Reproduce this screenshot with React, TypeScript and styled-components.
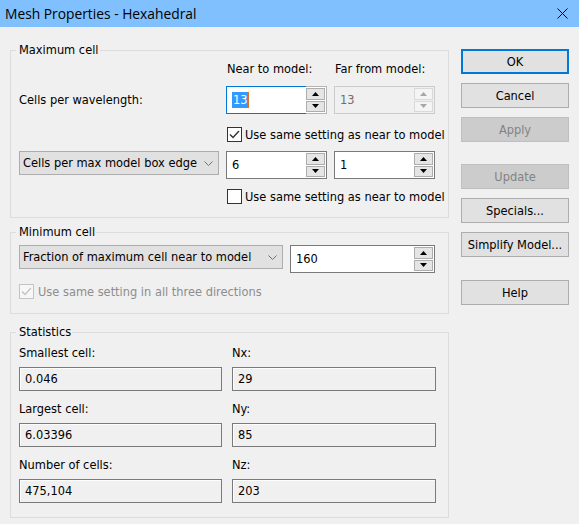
import styled, { createGlobalStyle } from 'styled-components'

const GlobalStyle = createGlobalStyle`
  html, body {
    margin: 0;
    padding: 0;
    background: #f0f0f0;
  }
  body {
    font-family: 'DejaVu Sans Condensed', 'DejaVu Sans', sans-serif;
    font-stretch: semi-condensed;
    font-size: 12.7px;
    line-height: 14px;
    color: #000;
  }
`

const Window = styled.div`
  width: 579px;
  height: 524px;
  background: #f0f0f0;
  overflow: hidden;
`
const TitleBar = styled.div`
  height: 27px;
  background: #80c0ff;
  display: flex;
  align-items: center;
  justify-content: space-between;
  padding: 0 11px 0 5px;
  box-sizing: border-box;
  font-family: 'Open Sans', 'Noto Sans', sans-serif;
  font-stretch: normal;
  font-size: 13.8px;
`
const Main = styled.div`
  display: flex;
  gap: 12px;
  padding: 16px 0 0 10px;
`
const LeftCol = styled.div`
  width: 439px;
  display: flex;
  flex-direction: column;
`
const Group = styled.fieldset<{ $mt: number; $pt: number; $pb: number }>`
  margin: ${(p) => p.$mt}px 0 0;
  padding: ${(p) => p.$pt}px 8px ${(p) => p.$pb}px;
  border: 1px solid #dcdcdc;
  min-width: 0;
  box-sizing: border-box;
`
const Legend = styled.legend`
  margin-left: -3px;
  padding: 0 1px 0 3px;
  line-height: 14px;
`
const Row = styled.div<{ $mt?: number; $align?: string }>`
  display: grid;
  grid-template-columns: 200px 101px 101px;
  column-gap: 7px;
  align-items: ${(p) => p.$align ?? 'center'};
  margin-top: ${(p) => p.$mt ?? 0}px;
`
const FlexRow = styled.div<{ $mt?: number }>`
  display: flex;
  gap: 7px;
  align-items: flex-start;
  margin-top: ${(p) => p.$mt ?? 0}px;
`
const ColHead = styled.div`
  padding-left: 1px;
  white-space: nowrap;
`
const CheckSpan = styled.div`
  grid-column: 2 / span 2;
  padding-left: 1px;
`

const CheckRow = styled.div<{ $disabled?: boolean; $mt?: number }>`
  display: flex;
  align-items: center;
  gap: ${(p) => (p.$disabled ? 4 : 3)}px;
  height: 15px;
  white-space: nowrap;
  margin-top: ${(p) => p.$mt ?? 0}px;
  color: ${(p) => (p.$disabled ? '#8d8d8d' : '#000')};
`
const Box = styled.span<{ $disabled?: boolean }>`
  flex: none;
  width: 15px;
  height: 15px;
  box-sizing: border-box;
  border: 1px solid ${(p) => (p.$disabled ? '#c4c4c4' : '#333')};
  background: ${(p) => (p.$disabled ? '#f7f7f7' : '#fff')};
  display: flex;
  align-items: center;
  justify-content: center;
`

const Spin = styled.div<{ $w: number }>`
  display: flex;
  width: ${(p) => p.$w}px;
  height: 28px;
`
type SpinState = 'focus' | 'normal' | 'disabled'
const fieldBorder = { focus: '#0078d7', normal: '#7a7a7a', disabled: '#cccccc' }
const SpinField = styled.div<{ $state: SpinState }>`
  flex: 1;
  box-sizing: border-box;
  border: 1px solid ${(p) => fieldBorder[p.$state]};
  border-right: none;
  background: ${(p) => (p.$state === 'disabled' ? '#f0f0f0' : '#fff')};
  color: ${(p) => (p.$state === 'disabled' ? '#6d6d6d' : '#000')};
  display: flex;
  align-items: center;
  padding-left: 5px;
`
const SpinButtons = styled.div<{ $state: SpinState }>`
  width: 21px;
  box-sizing: border-box;
  border: 1px solid ${(p) => (p.$state === 'disabled' ? '#cccccc' : p.$state === 'focus' ? '#b4b4b4' : '#7a7a7a')};
  border-left: none;
  background: ${(p) => (p.$state === 'disabled' ? '#f0f0f0' : '#fff')};
  padding: 1px 1px 1px 0;
  display: flex;
  flex-direction: column;
  gap: 1px;
`
const SpinButton = styled.div<{ $disabled?: boolean }>`
  flex: 1;
  border: 1px solid ${(p) => (p.$disabled ? '#d9d9d9' : '#adadad')};
  background: ${(p) => (p.$disabled ? '#f4f4f4' : '#e5e5e5')};
  display: flex;
  align-items: center;
  justify-content: center;
`
const Selected = styled.span`
  background: #3399ff;
  color: #fff;
  padding: 1px 0 1px 1px;
  border-right: 1px solid #d9731f;
`

const Combo = styled.div<{ $w: number }>`
  width: ${(p) => p.$w}px;
  height: 24px;
  box-sizing: border-box;
  border: 1px solid #adadad;
  background: #e1e1e1;
  display: flex;
  align-items: center;
  justify-content: space-between;
  padding: 0 5px 0 3px;
  white-space: nowrap;
`

const StatsGrid = styled.div`
  display: grid;
  grid-template-columns: 203px 204px;
  column-gap: 10px;
  row-gap: 11px;
`
const StatCell = styled.div`
  display: flex;
  flex-direction: column;
  gap: 7px;
`
const StatBox = styled.div`
  height: 24px;
  box-sizing: border-box;
  border: 1px solid #7a7a7a;
  box-shadow: inset 1px 1px 0 #fdfdfd;
  background: #f0f0f0;
  display: flex;
  align-items: center;
  padding-left: 5px;
`

const ButtonCol = styled.div`
  width: 108px;
  display: flex;
  flex-direction: column;
  gap: 9px;
  padding-top: 6px;
`
const Button = styled.button<{ $primary?: boolean; $mt?: number }>`
  height: 25px;
  margin: ${(p) => p.$mt ?? 0}px 0 0;
  padding: 0;
  box-sizing: border-box;
  border: ${(p) => (p.$primary ? '2px solid #0078d7' : '1px solid #adadad')};
  background: #e1e1e1;
  font: inherit;
  color: #000;
  &:disabled {
    background: #cccccc;
    border-color: #bfbfbf;
    color: #838383;
  }
`

const Arrow = ({ up, color }: { up?: boolean; color: string }) => (
  <svg width="7" height="4" viewBox="0 0 7 4">
    <polygon points={up ? '3.5,0 7,4 0,4' : '0,0 7,0 3.5,4'} fill={color} />
  </svg>
)

const Chevron = () => (
  <svg width="9" height="5" viewBox="0 0 9 5">
    <polyline points="0.5,0.5 4.5,4.5 8.5,0.5" fill="none" stroke="#707070" strokeWidth="1" />
  </svg>
)

const Check = ({ color }: { color: string }) => (
  <svg width="13" height="13" viewBox="0 0 13 13">
    <polyline points="2,6.5 5,9.5 11,3" fill="none" stroke={color} strokeWidth="1.4" />
  </svg>
)

const CheckBox = ({ label, checked, disabled, mt }: { label: string; checked?: boolean; disabled?: boolean; mt?: number }) => (
  <CheckRow $disabled={disabled} $mt={mt}>
    <Box $disabled={disabled}>{checked && <Check color={disabled ? '#c4c4c4' : '#333'} />}</Box>
    {label}
  </CheckRow>
)

const SpinBox = ({ value, w, state }: { value: React.ReactNode; w: number; state: SpinState }) => {
  const dis = state === 'disabled'
  const arrow = dis ? '#a6a6a6' : '#000'
  return (
    <Spin $w={w}>
      <SpinField $state={state}>{value}</SpinField>
      <SpinButtons $state={state}>
        <SpinButton $disabled={dis}>
          <Arrow up color={arrow} />
        </SpinButton>
        <SpinButton $disabled={dis}>
          <Arrow color={arrow} />
        </SpinButton>
      </SpinButtons>
    </Spin>
  )
}

const stats = [
  ['Smallest cell:', '0.046', 'Nx:', '29'],
  ['Largest cell:', '6.03396', 'Ny:', '85'],
  ['Number of cells:', '475,104', 'Nz:', '203'],
]

const App = () => {
  return (
    <Window>
      <GlobalStyle />
      <TitleBar>
        <span>Mesh Properties - Hexahedral</span>
        <svg width="11" height="11" viewBox="0 0 11 11">
          <path d="M0.5 0.5 L10.5 10.5 M10.5 0.5 L0.5 10.5" stroke="#000" strokeWidth="1" />
        </svg>
      </TitleBar>
      <Main>
        <LeftCol>
          <Group $mt={0} $pt={5} $pb={13}>
            <Legend>Maximum cell</Legend>
            <Row>
              <span />
              <ColHead>Near to model:</ColHead>
              <ColHead>Far from model:</ColHead>
            </Row>
            <Row $mt={10}>
              <span>Cells per wavelength:</span>
              <SpinBox w={101} state="focus" value={<Selected>13</Selected>} />
              <SpinBox w={101} state="disabled" value="13" />
            </Row>
            <Row $mt={13}>
              <CheckSpan>
                <CheckBox checked label="Use same setting as near to model" />
              </CheckSpan>
            </Row>
            <Row $mt={9} $align="start">
              <Combo $w={200}>
                <span>Cells per max model box edge</span>
                <Chevron />
              </Combo>
              <SpinBox w={101} state="normal" value="6" />
              <SpinBox w={101} state="normal" value="1" />
            </Row>
            <Row $mt={10}>
              <CheckSpan>
                <CheckBox label="Use same setting as near to model" />
              </CheckSpan>
            </Row>
          </Group>

          <Group $mt={7} $pt={6} $pb={14}>
            <Legend>Minimum cell</Legend>
            <FlexRow>
              <Combo $w={264}>
                <span>Fraction of maximum cell near to model</span>
                <Chevron />
              </Combo>
              <SpinBox w={145} state="normal" value="160" />
            </FlexRow>
            <CheckBox mt={11} checked disabled label="Use same setting in all three directions" />
          </Group>

          <Group $mt={11} $pt={7} $pb={14}>
            <Legend>Statistics</Legend>
            <StatsGrid>
              {stats.map(([l1, v1, l2, v2]) => [
                <StatCell key={l1}>
                  <span>{l1}</span>
                  <StatBox>{v1}</StatBox>
                </StatCell>,
                <StatCell key={l2}>
                  <span>{l2}</span>
                  <StatBox>{v2}</StatBox>
                </StatCell>,
              ])}
            </StatsGrid>
          </Group>
        </LeftCol>

        <ButtonCol>
          <Button $primary>OK</Button>
          <Button>Cancel</Button>
          <Button disabled>Apply</Button>
          <Button disabled $mt={13}>Update</Button>
          <Button>Specials...</Button>
          <Button>Simplify Model...</Button>
          <Button $mt={14}>Help</Button>
        </ButtonCol>
      </Main>
    </Window>
  )
}

export default App
